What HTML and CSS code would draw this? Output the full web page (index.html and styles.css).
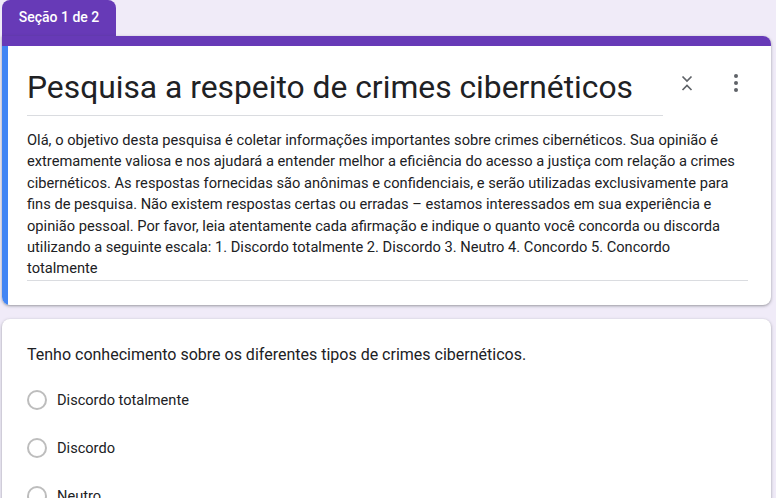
FILE: index.html
```html
<!DOCTYPE html>
<html lang="pt">
<head>
<meta charset="utf-8">
<link rel="stylesheet" href="styles.css">
</head>
<body>
<div class="page">
  <div class="tab">Seção 1 de 2</div>
  <div class="card header-card">
    <div class="topbar"></div>
    <div class="card-body">
      <div class="side"></div>
      <div class="content">
        <div class="title-row">
          <div class="title">Pesquisa a respeito de crimes cibernéticos</div>
          <div class="icons">
            <svg class="icon" width="24" height="24" viewBox="0 0 24 24"><path d="M7.5 5.5l4.5 4.5 4.5-4.5 M7.5 19l4.5-4.5 4.5 4.5" fill="none" stroke="#5f6368" stroke-width="1.7"/></svg>
            <svg class="icon" width="24" height="24" viewBox="0 0 24 24"><circle cx="12" cy="5" r="2" fill="#5f6368"/><circle cx="12" cy="12" r="2" fill="#5f6368"/><circle cx="12" cy="19" r="2" fill="#5f6368"/></svg>
          </div>
        </div>
        <div class="desc"><div class="desc-text">Olá, o objetivo desta pesquisa é coletar informações importantes sobre crimes cibernéticos. Sua opinião é extremamente valiosa e nos ajudará a entender melhor a eficiência do acesso a justiça com relação a crimes cibernéticos. As respostas fornecidas são anônimas e confidenciais, e serão utilizadas exclusivamente para fins de pesquisa. Não existem respostas certas ou erradas – estamos interessados em sua experiência e opinião pessoal. Por favor, leia atentamente cada afirmação e indique o quanto você concorda ou discorda utilizando a seguinte escala: 1. Discordo totalmente 2. Discordo 3. Neutro 4. Concordo 5. Concordo totalmente</div></div>
      </div>
    </div>
  </div>
  <div class="card question-card">
    <div class="question">Tenho conhecimento sobre os diferentes tipos de crimes cibernéticos.</div>
    <div class="options">
      <div class="option"><span class="radio"></span><span>Discordo totalmente</span></div>
      <div class="option"><span class="radio"></span><span>Discordo</span></div>
      <div class="option"><span class="radio"></span><span>Neutro</span></div>
    </div>
  </div>
</div>
</body>
</html>
```

FILE: styles.css
```css
* { box-sizing: border-box; }
html, body { margin: 0; padding: 0; }
body {
  background: #f0ebf8;
  font-family: Roboto, "Liberation Sans", Arial, sans-serif;
  color: #202124;
  width: 776px;
  height: 498px;
  overflow: hidden;
}
.page {
  padding: 0 5px 0 2px;
  display: flex;
  flex-direction: column;
}
.tab {
  width: 114px;
  height: 36px;
  background: #673ab7;
  color: #fff;
  border-radius: 8px 8px 0 0;
  font-size: 14px;
  font-weight: 500;
  display: flex;
  align-items: center;
  justify-content: center;
  padding-bottom: 2px;
}
.card {
  background: #fff;
  border-radius: 8px;
  box-shadow: 0 1px 2px rgba(60,64,67,0.3), 0 1px 3px 1px rgba(60,64,67,0.15);
}
.header-card {
  border-top-left-radius: 0;
  overflow: hidden;
}
.topbar {
  height: 10px;
  background: #673ab7;
}
.card-body {
  display: flex;
}
.side {
  width: 6px;
  background: #4285f4;
  flex: none;
}
.content {
  flex: 1;
  padding: 11px 24px 24px 19px;
}
.title-row {
  display: flex;
  align-items: flex-start;
}
.title {
  width: 636px;
  font-size: 31.8px;
  line-height: 48px;
  padding-top: 6px;
  padding-bottom: 4px;
  border-bottom: 1px solid #dadce0;
  color: #202124;
}
.icons {
  display: flex;
  gap: 25px;
  margin-left: 12px;
  padding-top: 14px;
}
.icon { display: block; }
.desc {
  margin-top: 14px;
  font-size: 14.66px;
  line-height: 21.4px;
  padding-bottom: 0;
  border-bottom: 1px solid #dadce0;
  color: #202124;
}
.desc-text {
  width: 712px;
}
.question-card {
  margin-top: 14px;
  padding: 24px 24px 24px 25px;
}
.question {
  font-size: 16px;
  line-height: 24px;
}
.options {
  margin-top: 9px;
  display: flex;
  flex-direction: column;
}
.option {
  display: flex;
  align-items: center;
  height: 48px;
  font-size: 14.6px;
}
.radio {
  width: 20px;
  height: 20px;
  border: 2px solid #bdbdbd;
  border-radius: 50%;
  margin-right: 10px;
  flex: none;
}
```
